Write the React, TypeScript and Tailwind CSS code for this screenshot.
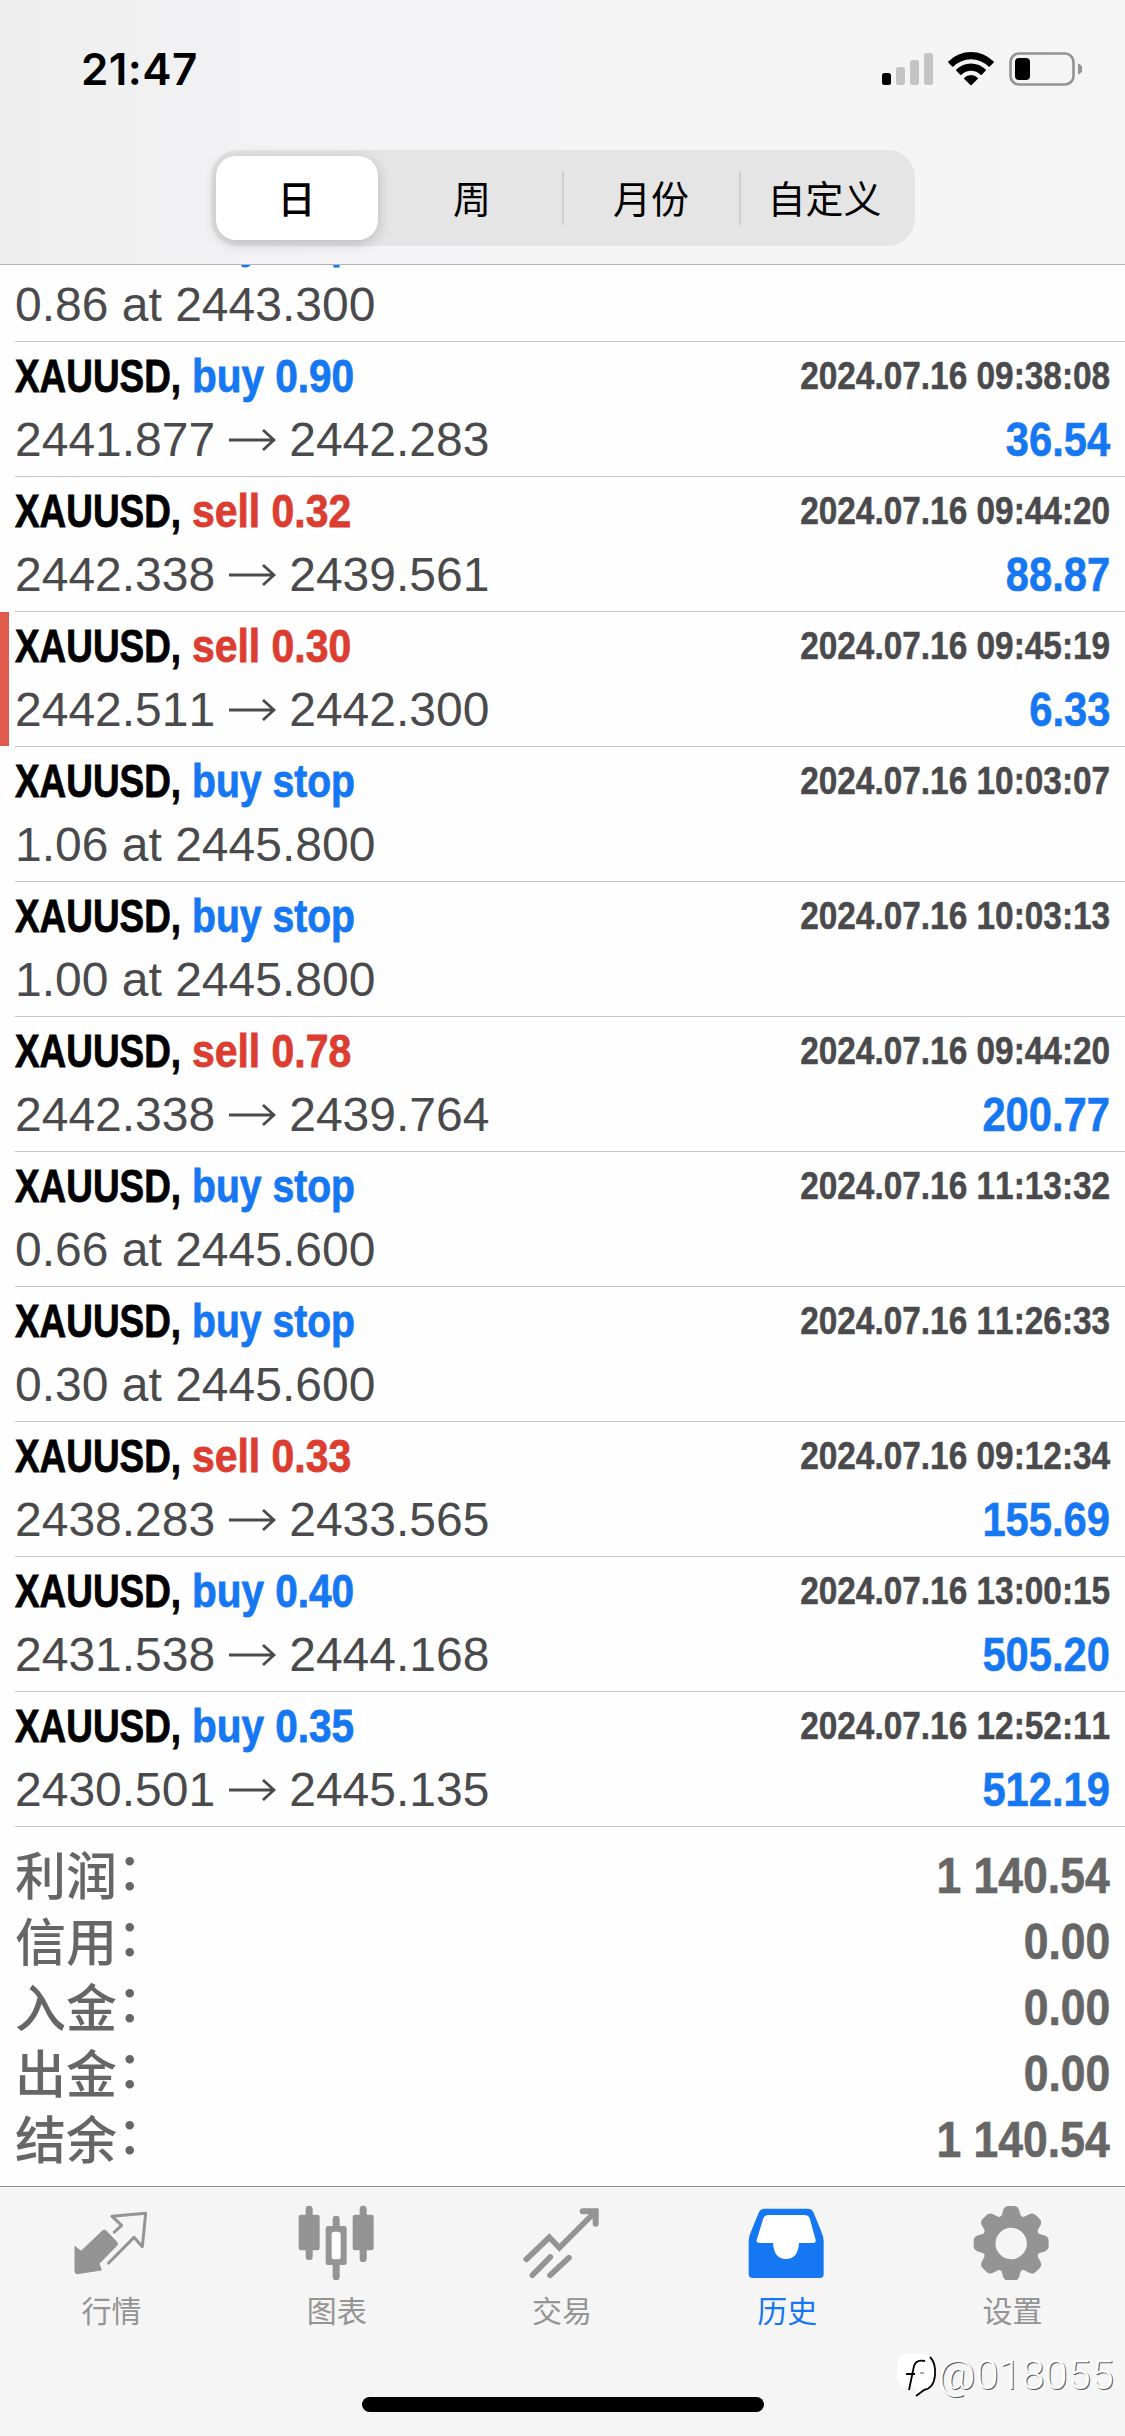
import React from "react";

type Side = "buy" | "sell" | "stop";
type Deal = {
  side: Side;
  label: string;
  from: string;
  to?: string;
  time: string;
  profit?: string;
  marked?: boolean;
};

const deals: Deal[] = [
  { side: "stop", label: "buy stop", from: "0.86 at 2443.300", time: "2024.07.16 09:36:42" },
  { side: "buy", label: "buy 0.90", from: "2441.877", to: "2442.283", time: "2024.07.16 09:38:08", profit: "36.54" },
  { side: "sell", label: "sell 0.32", from: "2442.338", to: "2439.561", time: "2024.07.16 09:44:20", profit: "88.87" },
  { side: "sell", label: "sell 0.30", from: "2442.511", to: "2442.300", time: "2024.07.16 09:45:19", profit: "6.33", marked: true },
  { side: "stop", label: "buy stop", from: "1.06 at 2445.800", time: "2024.07.16 10:03:07" },
  { side: "stop", label: "buy stop", from: "1.00 at 2445.800", time: "2024.07.16 10:03:13" },
  { side: "sell", label: "sell 0.78", from: "2442.338", to: "2439.764", time: "2024.07.16 09:44:20", profit: "200.77" },
  { side: "stop", label: "buy stop", from: "0.66 at 2445.600", time: "2024.07.16 11:13:32" },
  { side: "stop", label: "buy stop", from: "0.30 at 2445.600", time: "2024.07.16 11:26:33" },
  { side: "sell", label: "sell 0.33", from: "2438.283", to: "2433.565", time: "2024.07.16 09:12:34", profit: "155.69" },
  { side: "buy", label: "buy 0.40", from: "2431.538", to: "2444.168", time: "2024.07.16 13:00:15", profit: "505.20" },
  { side: "buy", label: "buy 0.35", from: "2430.501", to: "2445.135", time: "2024.07.16 12:52:11", profit: "512.19" },
];

const summary = [
  ["利润", "1 140.54"],
  ["信用", "0.00"],
  ["入金", "0.00"],
  ["出金", "0.00"],
  ["结余", "1 140.54"],
];

const sideStyle: Record<Side, string> = {
  buy: "text-[#1677f2] scale-x-[0.862]",
  stop: "text-[#1677f2] scale-x-[0.832]",
  sell: "text-[#dc3d31] scale-x-[0.87]",
};

function StatusBar() {
  return (
    <div className="flex h-[138px] items-center justify-between pl-[81px] pr-[43px]">
      <span className="font-['Inter',sans-serif] text-[44px] leading-none font-semibold tracking-[0.4px]">21:47</span>
      <svg width="202" height="40" viewBox="880 49 202 40">
        <rect x="882" y="73" width="9" height="12" rx="2.5" fill="#000" />
        <rect x="896" y="67" width="9" height="18" rx="2.5" fill="#c4c4c4" />
        <rect x="910" y="60" width="9" height="25" rx="2.5" fill="#c4c4c4" />
        <rect x="924" y="53" width="9" height="32" rx="2.5" fill="#c4c4c4" />
        <path d="M948.3 61.4a32.2 32.2 0 0 1 45.4 0q.5.6 0 1.200l-3.900 3.900q-.6.500-1.200 0a25 25 0 0 0-35.200 0q-.6.500-1.200 0l-3.900-3.900q-.5-.6 0-1.200Z" />
        <path d="M956.300 69.500a21 21 0 0 1 29.400 0q.6.600 0 1.200l-4 4q-.6.600-1.200 0a13.600 13.600 0 0 0-19 0q-.6.600-1.200 0l-4-4q-.6-.6 0-1.200Z" />
        <path d="M964.300 77.700a9.600 9.600 0 0 1 13.400 0q.6.600 0 1.200l-6.100 6.100q-.6.600-1.200 0l-6.100-6.100q-.6-.6 0-1.200Z" />
        <rect x="1010.500" y="53.500" width="63" height="31" rx="8.500" fill="none" stroke="#939393" strokeWidth="2.600" />
        <rect x="1015" y="58" width="15" height="22" rx="4" />
        <path d="M1078 63.500q4.500 1.500 4.500 5.500t-4.500 5.500Z" fill="#939393" />
      </svg>
    </div>
  );
}

function Segments() {
  return (
    <div className="mx-auto flex h-[96px] w-[704px] rounded-[27px] bg-[#e5e5e6] p-[6px] pl-[5px] font-['Noto_Sans_CJK_SC',sans-serif] text-[38px] leading-[60px]">
      <div className="flex h-[84px] w-[162px] items-center justify-center rounded-[20px] bg-white pb-[3px] font-medium shadow-[0_3px_14px_rgba(0,0,0,0.2)]">
        日
      </div>
      <div className="flex w-[184px] items-center justify-center pb-[3px] pl-[5px]">周</div>
      <div className="my-auto h-[54px] w-[2px] bg-[#cfcfd2]" />
      <div className="flex w-[175px] items-center justify-center pb-[3px]">月份</div>
      <div className="my-auto h-[54px] w-[2px] bg-[#cfcfd2]" />
      <div className="flex flex-1 items-center justify-center pb-[3px]">
        <span className="whitespace-nowrap">自定义</span>
      </div>
    </div>
  );
}

function PriceArrow() {
  return (
    <svg className="mx-[13px]" width="48" height="24" viewBox="0 0 48 24" fill="none" stroke="currentColor" strokeWidth="2.800" aria-label="→">
      <path d="M1 12H46M35 2 46 12 35 22" />
    </svg>
  );
}

function DealRow({ deal }: { deal: Deal }) {
  return (
    <div className="relative h-[135px] shrink-0 pl-[15px]">
      {deal.marked && <div className="absolute top-0 left-0 h-[134px] w-[9px] bg-[#e15b4d]" />}
      <div className="h-full border-b border-[#c3c4c4] pt-px pr-[15px] whitespace-nowrap [font-kerning:none]">
        <div className="flex h-[64px] items-center justify-between font-bold">
          <div className="flex text-[47px] leading-none [-webkit-text-stroke:0.8px]">
            <span className="w-[177px]">
              <span className="inline-block origin-left scale-x-[0.785] text-black">XAUUSD,</span>
            </span>
            <span className={"inline-block origin-left " + sideStyle[deal.side]}>{deal.label}</span>
          </div>
          <span className="origin-right scale-x-[0.856] text-[39px] leading-none text-[#4a4a4d] [-webkit-text-stroke:0.5px]">
            {deal.time}
          </span>
        </div>
        <div className="flex h-[66px] items-center justify-between leading-none">
          <div className="flex items-center text-[48px] text-[#4a4a4d]">
            <span>{deal.from}</span>
            {deal.to && (
              <>
                <PriceArrow />
                <span>{deal.to}</span>
              </>
            )}
          </div>
          {deal.profit && (
            <span className="origin-right scale-x-[0.868] text-[48px] font-bold text-[#1677f2] [-webkit-text-stroke:0.6px]">
              {deal.profit}
            </span>
          )}
        </div>
      </div>
    </div>
  );
}

function QuotesIcon() {
  return (
    <svg width="80" height="80" viewBox="37 0 240 240" fill="currentColor" stroke="currentColor" strokeLinejoin="round">
      <path d="M129 92q6-4 11 1l31 33q5 6 0 11l-53 54 7 19-72 11q-7 0-7-7V139l18 15Z" strokeWidth="3" />
      <path d="M161 99 186 76 157 49 258 40 248 140 223 112 144 192" fill="none" strokeWidth="9" />
    </svg>
  );
}

function ChartIcon() {
  return (
    <svg width="80" height="80" viewBox="712 0 240 240" fill="currentColor">
      <rect x="738" y="17" width="21" height="163" rx="10" />
      <rect x="717" y="44" width="63" height="107" rx="7" />
      <rect x="900" y="17" width="21" height="169" rx="10" />
      <rect x="879" y="44" width="63" height="107" rx="7" />
      <rect x="819" y="47" width="21" height="193" rx="10" />
      <rect x="798" y="78" width="63" height="117" rx="7" />
      <rect x="816" y="95" width="27" height="83" rx="8" fill="#fff" />
    </svg>
  );
}

function TradeIcon() {
  return (
    <svg width="80" height="80" viewBox="37 0 240 240" fill="none" stroke="currentColor" strokeWidth="17" strokeLinecap="round" strokeLinejoin="round">
      <path d="M50 178 119 112 149 143 256 36" strokeLinejoin="miter" />
      <path d="M219 34H258V71" strokeLinejoin="miter" strokeWidth="18" />
      <path d="M68 226 122 171M121 226 178 173" />
    </svg>
  );
}

function HistoryIcon() {
  return (
    <svg width="80" height="80" viewBox="712 0 240 240">
      <path d="M764 26H894q12 0 17 10l23 56q8 18 8 30V222q0 12-12 12H729q-12 0-12-12V122q0-12 8-30l23-56q5-10 16-10Z" fill="currentColor" />
      <path d="M777 45H883q13 0 17 10l18 65q1 9-7 9H868q-3 48-39 48t-39-48H750q-11 0-9-9l20-65q4-10 16-10Z" fill="#fff" />
    </svg>
  );
}

function SettingsIcon() {
  const tooth = "M339 62Q352 50 355 32Q359 18 371 18H388Q400 18 404 32Q407 50 420 62Z";
  return (
    <svg width="80" height="80" viewBox="262 0 240 240" fill="currentColor">
      {[0, 45, 90, 135, 180, 225, 270, 315].map((a) => (
        <path key={a} d={tooth} transform={`rotate(${a} 379.5 130.500)`} />
      ))}
      <circle cx="379.500" cy="130.500" r="67" fill="none" stroke="currentColor" strokeWidth="40" />
    </svg>
  );
}

const tabs = [
  { label: "行情", icon: <QuotesIcon /> },
  { label: "图表", icon: <ChartIcon /> },
  { label: "交易", icon: <TradeIcon /> },
  { label: "历史", icon: <HistoryIcon />, active: true },
  { label: "设置", icon: <SettingsIcon /> },
];

function Watermark() {
  return (
    <div className="absolute top-[164px] right-[11px] flex items-center">
      <svg width="42" height="48" viewBox="0 0 42 48" fill="none">
        <path d="M12 3H24Q38 3 38 18V26Q38 37 26 38L21 43V37H14Q1 37 1 22V16Q1 3 12 3Z" fill="#fff" />
        <path d="M34 6Q40 12 39 24Q38 37 28 39L20 45" stroke="#000" strokeWidth="1.800" />
        <path d="M29 10Q20 8 18 15L13 39M10 23H19" stroke="#000" strokeWidth="1.800" />
        <path d="M24 22H28" stroke="#555" />
      </svg>
      <span className="font-['Roboto',sans-serif] text-[41px] leading-none font-light tracking-[0.3px] text-white [text-shadow:1px_1px_0_#555]">
        @018055
      </span>
    </div>
  );
}

function TabBar() {
  return (
    <div className="relative flex h-[250px] flex-col border-t border-[#8e8e8e] bg-[#f5f5f5]">
      <div className="-ml-px grid grid-cols-5 pt-[13px]">
        {tabs.map((t) => (
          <div key={t.label} className={"flex flex-col items-center " + (t.active ? "text-[#1677f2]" : "text-[#949494]")}>
            {t.icon}
            <span className="mt-[7px] font-['Noto_Sans_CJK_SC',sans-serif] text-[30px] leading-[44px]">{t.label}</span>
          </div>
        ))}
      </div>
      <Watermark />
      <div className="mx-auto mt-[66px] h-[15px] w-[402px] rounded-full bg-black" />
    </div>
  );
}

export default function App() {
  return (
    <div className="flex h-[2436px] w-[1125px] flex-col overflow-hidden bg-[#fefefe] font-['Liberation_Sans',Arial,sans-serif] text-black">
      <header className="relative z-10 h-[265px] shrink-0 border-b border-[#b4b4b6] bg-linear-to-r from-[#eeeeef] via-[#f4f4f6] via-30% to-[#f5f5f5]">
        <StatusBar />
        <div className="pt-[12px]">
          <Segments />
        </div>
      </header>
      <main className="flex h-[1921px] shrink-0 flex-col overflow-hidden">
        <div className="-mt-[58px]">
          {deals.map((d, i) => (
            <DealRow key={i} deal={d} />
          ))}
        </div>
        <div className="px-[15px] pt-[16px] text-[#666]">
          {summary.map(([k, v]) => (
            <div key={k} className="flex h-[66px] items-center justify-between [font-kerning:none]">
              <span className="-mt-[7px] flex font-['Noto_Sans_CJK_SC',sans-serif] text-[51px] leading-[66px] font-medium">
                <span>{k}</span>
                <span className="relative -top-[5px]">：</span>
              </span>
              <span className="origin-right scale-x-[0.89] text-[50px] leading-none font-bold [-webkit-text-stroke:0.6px]">{v}</span>
            </div>
          ))}
        </div>
      </main>
      <TabBar />
    </div>
  );
}
